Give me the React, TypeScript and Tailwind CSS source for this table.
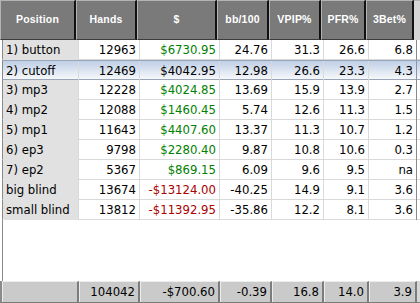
import React from "react";

type Row = {
  pos: string;
  hands: string;
  money: string;
  bb: string;
  vpip: string;
  pfr: string;
  threeBet: string;
};

const rows: Row[] = [
  { pos: "1) button", hands: "12963", money: "$6730.95", bb: "24.76", vpip: "31.3", pfr: "26.6", threeBet: "6.8" },
  { pos: "2) cutoff", hands: "12469", money: "$4042.95", bb: "12.98", vpip: "26.6", pfr: "23.3", threeBet: "4.3" },
  { pos: "3) mp3", hands: "12228", money: "$4024.85", bb: "13.69", vpip: "15.9", pfr: "13.9", threeBet: "2.7" },
  { pos: "4) mp2", hands: "12088", money: "$1460.45", bb: "5.74", vpip: "12.6", pfr: "11.3", threeBet: "1.5" },
  { pos: "5) mp1", hands: "11643", money: "$4407.60", bb: "13.37", vpip: "11.3", pfr: "10.7", threeBet: "1.2" },
  { pos: "6) ep3", hands: "9798", money: "$2280.40", bb: "9.87", vpip: "10.8", pfr: "10.6", threeBet: "0.3" },
  { pos: "7) ep2", hands: "5367", money: "$869.15", bb: "6.09", vpip: "9.6", pfr: "9.5", threeBet: "na" },
  { pos: "big blind", hands: "13674", money: "-$13124.00", bb: "-40.25", vpip: "14.9", pfr: "9.1", threeBet: "3.6" },
  { pos: "small blind", hands: "13812", money: "-$11392.95", bb: "-35.86", vpip: "12.2", pfr: "8.1", threeBet: "3.6" },
];

const headers = ["Position", "Hands", "$", "bb/100", "VPIP%", "PFR%", "3Bet%"];
const totals = ["", "104042", "-$700.60", "-0.39", "16.8", "14.0", "3.9"];

const grid = "grid grid-cols-[76px_61px_80px_52px_52px_45px_48px_1fr]";

export default function App() {
  return (
    <div className="w-[420px] h-[303px] bg-white flex flex-col overflow-hidden text-[13px] text-black font-['DejaVu_Sans_Condensed','DejaVu_Sans',sans-serif]">
      {/* header */}
      <div className={`${grid} h-[40px] shrink-0 bg-[#d6d6d6]`}>
        {headers.map((h) => (
          <div
            key={h}
            className="flex items-center justify-center bg-[#7a7a7a] border-t border-l border-t-[#b4b4b4] border-l-[#b4b4b4] border-r-2 border-r-[#111] border-b border-b-[#3c3c3c] text-white font-bold text-[10.5px] font-['Liberation_Sans',sans-serif] tracking-[0.2px]"
          >
            {h}
          </div>
        ))}
        <div className="border-t border-[#b4b4b4]" />
      </div>

      {/* body */}
      <div className="flex flex-col">
        {rows.map((r, i) => {
          const selected = i === 1;
          const moneyColor = selected
            ? "text-black"
            : r.money.startsWith("-")
              ? "text-[#aa0000]"
              : "text-[#008000]";
          const cell = "flex items-center justify-end pr-[3px] border-r border-[#d9d9d9]";
          return (
            <div
              key={r.pos}
              className={`${grid} h-[20px] ml-[2px] border-l border-[#8a8a8a] ${
                selected
                  ? "bg-gradient-to-b from-[#bfcfe5] to-[#f6f8fb] border-y border-y-[#9aa6b8]"
                  : "border-b border-b-[#d9d9d9]"
              }`}
            >
              <div className={`flex items-center pl-[3px] border-r border-[#d9d9d9] ${selected ? "" : "bg-[#e1e1e1]"}`}>
                {r.pos}
              </div>
              <div className={cell}>{r.hands}</div>
              <div className={`${cell} ${moneyColor}`}>{r.money}</div>
              <div className={cell}>{r.bb}</div>
              <div className={cell}>{r.vpip}</div>
              <div className={cell}>{r.pfr}</div>
              <div className={`${cell} ${selected ? "border-r-[#8a96a8]" : "border-r-[#8a8a8a]"}`}>{r.threeBet}</div>
              <div />
            </div>
          );
        })}
      </div>

      {/* empty area */}
      <div className="flex-1 ml-[2px] border-l border-[#8a8a8a]" />

      {/* totals */}
      <div className={`${grid} h-[22px] shrink-0 bg-[#d2d2d2] border-l-[3px] border-[#8a8a8a] border-b-2 border-b-[#7a7a7a]`}>
        {totals.map((t, i) => (
          <div
            key={i}
            className={`flex items-center justify-end pr-[3px] bg-[#cacaca] border-t border-l border-t-[#ececec] border-l-[#ececec] border-r-2 border-r-[#7c7c7c] ${
              i === 0 ? "-ml-[1px]" : ""
            }`}
          >
            {t}
          </div>
        ))}
        <div className="bg-[#d6d6d6]" />
      </div>
    </div>
  );
}
